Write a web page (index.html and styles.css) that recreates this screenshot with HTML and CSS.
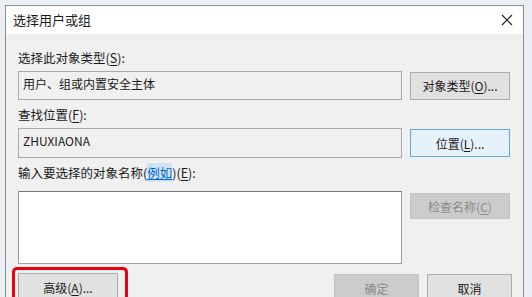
FILE: index.html
```html
<!DOCTYPE html>
<html lang="zh-CN">
<head>
    <meta charset="UTF-8">
    <title>选择用户或组</title>
    <link rel="stylesheet" href="styles.css">
</head>
<body>

    <div class="window">
        <div class="titlebar">
            <span class="title">选择用户或组</span>
            <svg class="close" width="12" height="12" viewBox="0 0 12 12">
                <path d="M1 1 L11 11 M11 1 L1 11" stroke="#222" stroke-width="1.2" fill="none"/>
            </svg>
        </div>

        <div class="dialog">

            <div class="label label-first">选择此对象类型(<u>S</u>):</div>
            <div class="row">
                <div class="field">用户、组或内置安全主体</div>
                <button class="btn">对象类型(<u>O</u>)...</button>
            </div>

            <div class="label">查找位置(<u>F</u>):</div>
            <div class="row">
                <div class="field field-tall">ZHUXIAONA</div>
                <button class="btn btn-focus">位置(<u>L</u>)...</button>
            </div>

            <div class="label">输入要选择的对象名称(<a class="link">例如</a>)(<u>E</u>):</div>
            <div class="row row-top">
                <div class="textbox"></div>
                <button class="btn btn-disabled btn-short">检查名称(<u>C</u>)</button>
            </div>

            <div class="footer">
                <div class="mark">
                    <button class="btn">高级(<u>A</u>)...</button>
                </div>
                <div class="footer-right">
                    <button class="btn btn-disabled btn-narrow">确定</button>
                    <button class="btn btn-narrow">取消</button>
                </div>
            </div>

        </div>
    </div>

</body>
</html>
```

FILE: styles.css
```css
html, body{margin: 0; height: 100%;}
body{background: #eaeff5; padding: 5px 0 0 5px; box-sizing: border-box; overflow: hidden;
    font-family: "Noto Sans CJK SC", "Noto Sans", sans-serif; color: #1a1a1a;}

.window{width: 517px; height: 292px; overflow: hidden; border: 1px solid #8c8c8c; border-bottom: none; background: #f0f0f0;}

.titlebar{height: 28px; background: #fff; display: flex; align-items: center; justify-content: space-between; padding: 0 10px 0 7px;}
.title{font-size: 13px; line-height: 16px;}
.close{display: block;}

.dialog{padding: 0 11px 0 12px;}

.label{font-size: 12.5px; line-height: 16px; margin-top: 7px;}
.label-first{margin-top: 16px;}
.label u{text-underline-offset: 2px;}
.link{color: #0066cc; text-decoration: underline; background: #cfe4f7;}

.row{display: flex; gap: 8px; margin-top: 5px; align-items: center;}
.row-top{align-items: flex-start; margin-top: 10px;}

.field{width: 384px; height: 29px; box-sizing: border-box; border: 1px solid #a9a9a9; background: #f0f0f0;
    font-size: 12px; line-height: 18px; padding: 3px 4px;}
.field-tall{height: 30px;}

.textbox{width: 384px; height: 73px; box-sizing: border-box; border: 1px solid #a0a0a0; border-top-color: #7a7a7a; background: #fff;}

.btn{width: 100px; height: 28px; box-sizing: border-box; border: 1px solid #adadad; background: #e1e1e1;
    font-family: inherit; font-size: 12px; color: #1a1a1a; padding: 0; cursor: default;}
.btn u{text-underline-offset: 2px;}
.btn-focus{background: #e5f1fb; border-color: #5ea8de;}
.btn-disabled{background: #cccccc; border-color: #c2c2c2; color: #8a8a8a;}
.btn-short{height: 26px; margin-top: 2px;}
.btn-narrow{width: 85px;}

.footer{display: flex; justify-content: space-between; align-items: flex-start; margin-top: 3px;}
.mark{margin-left: -6px; padding: 3px 7px 0 3px; border: 3px solid #e60012; border-bottom: none; border-radius: 5px 5px 0 0; height: 40px;}
.footer-right{display: flex; gap: 8px; padding-top: 7px;}
```
